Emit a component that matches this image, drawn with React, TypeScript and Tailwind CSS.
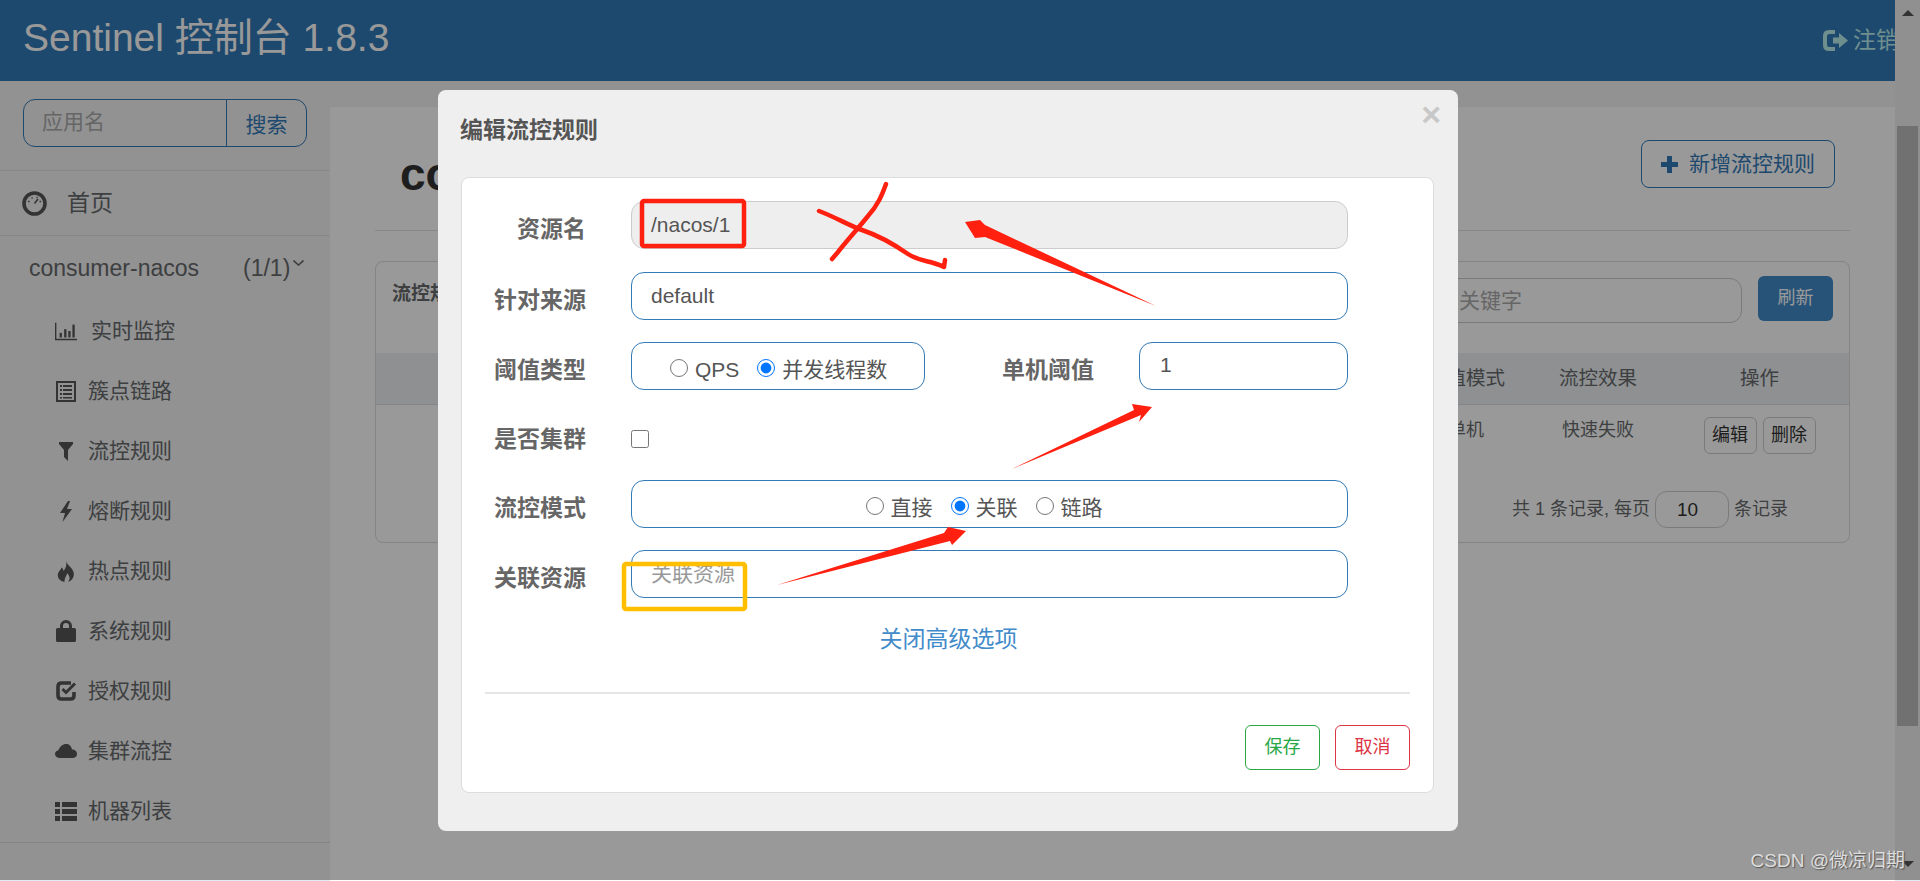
import React from "react";

const FONT = { fontFamily: '"Liberation Sans","Noto Sans CJK SC",sans-serif' };

const Fill = ({ w, h, d }: { w: number; h: number; d: string }) => (
  <svg width={w} height={h} viewBox={`0 0 ${w} ${h}`} fill="currentColor" fillRule="evenodd"><path d={d} /></svg>
);

const Dashboard = () => (
  <svg width="25" height="25" viewBox="0 0 25 25" fill="none" stroke="currentColor">
    <circle cx="12.5" cy="12.5" r="10.5" strokeWidth="3.6" />
    <path d="M12.5 12.5L16 8" strokeWidth="1.5" />
    <path d="M6 10.5h1.6M9.5 7h1.2M14.5 6.5h1.2M17.5 10.5h1.6" strokeWidth="1.6" />
  </svg>
);
const Stats = () => (
  <svg width="24" height="19" viewBox="0 0 24 19" fill="currentColor">
    <path d="M0 0h1.5v17.5H24V19H0z" />
    <rect x="5" y="11" width="2.5" height="5" /><rect x="10" y="7" width="2.5" height="9" />
    <rect x="14.5" y="9" width="2.5" height="7" /><rect x="19" y="2" width="2.5" height="14" />
  </svg>
);
const ListAlt = () => (
  <svg width="20" height="21" viewBox="0 0 20 21" fill="currentColor" fillRule="evenodd">
    <path d="M0 0h20v21H0zM2 2v17h16V2z" />
    <path d="M4 4h2v2H4zM7 4h9v2H7zM4 8h2v2H4zM7 8h9v2H7zM4 12h2v2H4zM7 12h9v2H7zM4 16h2v1.5H4zM7 16h9v1.5H7z" />
  </svg>
);
const Lock = () => (
  <svg width="20" height="22" viewBox="0 0 20 22" fill="currentColor" fillRule="evenodd">
    <path d="M4 8V6a6 6 0 0 1 12 0v2h2.5Q20 8 20 9.5V20.5Q20 22 18.5 22H1.5Q0 22 0 20.5V9.5Q0 8 1.5 8zM7 8h6V6a3 3 0 0 0-6 0z" />
  </svg>
);
const Check = () => (
  <svg width="21" height="20" viewBox="0 0 21 20" fill="none" stroke="currentColor">
    <path d="M15 2H5.5Q2 2 2 5.5V14.500Q2 18 5.500 18H14.500Q18 18 18 14.500V11" strokeWidth="3.600" />
    <path d="M6.500 8L10 11.500L19 2.500" strokeWidth="3" />
  </svg>
);
const Rows = () => (
  <svg width="22" height="19" viewBox="0 0 22 19" fill="currentColor">
    <path d="M0 0h5v5H0zM7 0h15v5H7zM0 7h5v5H0zM7 7h15v5H7zM0 14h5v5H0zM7 14h15v5H7z" />
  </svg>
);

const menu: { icon: React.ReactNode; text: string; cls?: string }[] = [
  { icon: <Stats />, text: "实时监控", cls: "pl-[3px]" },
  { icon: <ListAlt />, text: "簇点链路" },
  { icon: <Fill w={14} h={19} d="M0 0H14V2L9 8V19L5 15V8L0 2Z" />, text: "流控规则" },
  { icon: <Fill w={14} h={21} d="M9 0L1 12H6L3.5 21L13 8H8L11 0Z" />, text: "熔断规则" },
  { icon: <Fill w={18} h={21} d="M9 0C10 4 15 6 16.500 11C18 16 14.500 20 11 21C13.500 18 13 15 10 12C10 15 7.500 16 7.500 21C3 20 0 17 1 12.500C2 9.500 4 9 4.500 6.500C6 7.500 6.500 9 6.500 10C9 7 10 4 9 0Z" />, text: "热点规则" },
  { icon: <Lock />, text: "系统规则" },
  { icon: <Check />, text: "授权规则" },
  { icon: <Fill w={22} h={14} d="M5 14C2 14 0 12 0 10C0 8 1.500 6.500 3.500 6.300C4.500 2.500 8 0 11 0C14 0 16.500 2 17 5.500C20 5.500 22 7.500 22 10C22 12.500 20 14 17 14Z" />, text: "集群流控" },
  { icon: <Rows />, text: "机器列表" },
];

const Sidebar = () => (
  <aside className="w-[330px] shrink-0 bg-[#f3f3f4] text-[#676a6c]">
    <div className="h-[90px] pt-[18px] pl-[23px] border-b border-[#e2e2e4]">
      <div className="flex w-[284px] h-[48px] border border-[#337ab7] rounded-[12px] text-[21px] leading-[44px]">
        <div className="w-[203px] pl-[18px] text-[#aaaaaa] border-r border-[#337ab7]">应用名</div>
        <div className="flex-1 text-center text-[#337ab7] pt-[3px]">搜索</div>
      </div>
    </div>
    <div className="h-[65px] flex items-center pl-[22px] gap-[20px] border-b border-[#e2e2e4] text-[23px]">
      <span className="text-[#555]"><Dashboard /></span>
      <span>首页</span>
    </div>
    <div className="h-[65px] flex items-center pl-[29px] text-[23px]">
      <span className="w-[214px]">consumer-nacos</span>
      <span>(1/1)</span>
      <svg width="11" height="6" viewBox="0 0 11 6" fill="none" stroke="currentColor" strokeWidth="1.600" className="ml-[3px] mb-[12px]"><path d="M.5.5l5 4.500 5-4.500" /></svg>
    </div>
    <div className="border-b border-[#dcdcde] pb-[1px]">
      {menu.map((m) => (
        <div key={m.text} className="h-[60px] flex items-center pl-[55px] text-[21px]">
          <span className="w-[33px] flex justify-center pr-[11px] text-[#555]">{m.icon}</span>
          <span className={m.cls}>{m.text}</span>
        </div>
      ))}
    </div>
  </aside>
);

const Main = () => (
  <main className="flex-1 bg-[#f3f3f4] pt-[26px] text-[#676a6c] min-w-0">
    <div className="bg-white h-[774px] px-[45px]">
      <div className="h-[124px] flex items-center justify-between pr-[15px] border-b border-[#e0e0e0] pt-[12px]">
        <div className="text-[46px] font-bold text-[#333] pl-[25px]">consumer-nacos</div>
        <div className="w-[194px] h-[48px] border border-[#337ab7] rounded-[8px] flex items-center pl-[19px] gap-[11px] text-[21px] text-[#337ab7] -mt-[21px]">
          <svg width="17" height="17" viewBox="0 0 17 17" fill="currentColor"><path d="M6 0h5v6h6v5h-6v6H6v-6H0V6h6z" /></svg>
          <span>新增流控规则</span>
        </div>
      </div>
      <div className="mt-[30px] h-[282px] border border-[#dddddd] rounded-[8px] overflow-hidden">
        <div className="h-[91px] relative flex items-start pl-[16px] pr-[16px] pt-[14px]">
          <div className="font-bold text-[19px] pt-[4px]">流控规则</div>
          <div className="ml-auto h-[45px] w-[300px] mt-[2px] border border-[#cccccc] rounded-[12px] text-[21px] text-[#aaaaaa] leading-[43px] pl-[16px] mr-[16px]">关键字</div>
          <div className="w-[75px] h-[45px] bg-[#428bca] rounded-[6px] text-white text-[18px] flex items-center justify-center">刷新</div>
        </div>
        <div className="h-[52px] bg-[#edf0f4] border-b border-[#dddddd] flex items-center justify-end pr-[3px] text-[19.500px]">
          <div className="w-[114px] text-center">阈值模式</div>
          <div className="w-[150px] text-center">流控效果</div>
          <div className="w-[173px] text-center">操作</div>
        </div>
        <div className="h-[50px] flex items-start justify-end pr-[3px] text-[18px] pt-[12px]">
          <div className="w-[114px] text-center">单机</div>
          <div className="w-[150px] text-center">快速失败</div>
          <div className="w-[173px] flex justify-center gap-[6px] text-[#333]">
            <div className="w-[53px] h-[37px] border border-[#cccccc] rounded-[6px] flex items-center justify-center">编辑</div>
            <div className="w-[53px] h-[37px] border border-[#cccccc] rounded-[6px] flex items-center justify-center">删除</div>
          </div>
        </div>
        <div className="flex items-center justify-end pr-[61px] text-[18px] pt-[36px] gap-[5px]">
          <span>共 1 条记录, 每页</span>
          <div className="w-[74px] h-[37px] border border-[#cccccc] rounded-[12px] text-[19px] text-[#333] pl-[21px] leading-[35px]">10</div>
          <span>条记录</span>
        </div>
      </div>
    </div>
  </main>
);

const Scrollbar = () => (
  <div className="w-[25px] shrink-0 bg-[#f1f1f1] flex flex-col items-center relative">
    <svg width="12" height="6" viewBox="0 0 12 6" className="mt-[10px]" fill="#555"><path d="M6 0l6 6H0z" /></svg>
    <div className="w-[21px] h-[600px] bg-[#bdbdbd] mt-[110px]" />
    <svg width="12" height="6" viewBox="0 0 12 6" className="mt-[135px]" fill="#555"><path d="M0 0h12L6 6z" /></svg>
  </div>
);

const labelCls = "w-[124px] text-right font-bold text-[23px] text-[#666] shrink-0 mr-[45px] pt-[9px]";
const boxCls = "h-[48px] border border-[#337ab7] rounded-[13px] text-[21px] text-[#555]";

const Radio = ({ checked, children }: { checked?: boolean; children: React.ReactNode }) => (
  <label className="flex items-center">
    <input type="radio" readOnly checked={!!checked} className="ml-0 mr-0 mb-0 mt-[4px] w-[18px] h-[18px]" />
    <span className="ml-[7px] pt-[8px]">{children}</span>
  </label>
);

const Modal = () => (
  <div className="absolute left-[438px] top-[90px] w-[1020px] h-[741px] bg-[#efefef] rounded-[8px] pt-[87px] pl-[23px]">
    <div className="absolute left-[22px] top-[25px] text-[23px] font-bold text-[#555] leading-[30px]">编辑流控规则</div>
    <div className="absolute right-[17px] top-[2px] text-[34px] font-bold text-[#c8c8c8] leading-[36px] pt-[4px]">×</div>
    <div className="w-[973px] h-[616px] bg-white border border-[#dddddd] rounded-[8px] pt-[23px]">
      <div className="flex items-center h-[48px] mb-[23px]">
        <div className={labelCls}>资源名</div>
        <div className="flex-1 mr-[85px] h-[48px] bg-[#eeeeee] border border-[#cccccc] rounded-[13px] text-[21px] text-[#555] flex items-center pl-[19px]">/nacos/1</div>
      </div>
      <div className="flex items-center h-[48px] mb-[22px]">
        <div className={labelCls}>针对来源</div>
        <div className={`${boxCls} flex-1 mr-[85px] flex items-center pl-[19px]`}>default</div>
      </div>
      <div className="flex items-center h-[48px] mb-[23px]">
        <div className={labelCls}>阈值类型</div>
        <div className={`${boxCls} w-[294px] flex items-center pl-[38px] gap-[18px]`}>
          <Radio>QPS</Radio>
          <Radio checked>并发线程数</Radio>
        </div>
        <div className="font-bold text-[23px] text-[#666] ml-[77px] pt-[9px]">单机阈值</div>
        <div className={`${boxCls} w-[209px] ml-[45px] flex items-center pl-[20px]`}><span className="-mt-[2px]">1</span></div>
      </div>
      <div className="flex items-center h-[44px] mb-[23px]">
        <div className={labelCls}>是否集群</div>
        <input type="checkbox" readOnly className="ml-0 mr-0 mb-0 mt-[8px] w-[18px] h-[18px]" />
      </div>
      <div className="flex items-center h-[48px] mb-[22px]">
        <div className={labelCls}>流控模式</div>
        <div className={`${boxCls} flex-1 mr-[85px] flex items-center justify-center gap-[18px] pr-[11px]`}>
          <Radio>直接</Radio>
          <Radio checked>关联</Radio>
          <Radio>链路</Radio>
        </div>
      </div>
      <div className="flex items-center h-[48px]">
        <div className={labelCls}>关联资源</div>
        <div className={`${boxCls} flex-1 mr-[85px] flex items-center pl-[19px] text-[#999999]`}>关联资源</div>
      </div>
      <div className="text-center text-[23px] text-[#428bca] mt-[24px] mr-[-2px] leading-[34px]">关闭高级选项</div>
      <div className="h-[2px] bg-[#e5e5e5] mx-[23px] mt-[36px]" />
      <div className="flex justify-end gap-[15px] mt-[31px] mr-[23px] text-[18px]">
        <div className="w-[75px] h-[45px] border border-[#28a745] text-[#28a745] rounded-[6px] flex items-center justify-center">保存</div>
        <div className="w-[75px] h-[45px] border border-[#dc3545] text-[#dc3545] rounded-[6px] flex items-center justify-center">取消</div>
      </div>
    </div>
  </div>
);

const Marks = () => (
  <svg className="absolute inset-0 pointer-events-none" width="1920" height="881" viewBox="0 0 1920 881" fill="none">
    <rect x="642" y="201" width="102" height="45" rx="2" stroke="#ff2010" strokeWidth="4.500" />
    <rect x="624" y="564" width="121" height="45" rx="2" stroke="#ffbf00" strokeWidth="4.500" />
    <g stroke="#ff2010" strokeWidth="4.500" strokeLinecap="round" strokeLinejoin="round">
      <path d="M886 184C882 195 878 205 868 216C855 232 845 243 838 252L832 259" />
      <path d="M819 211C835 217 850 226 862 230C880 236 895 245 908 254C920 262 930 260 944 267L945 260" />
    </g>
    <g fill="#ff2010">
      <path d="M965 222L980 220L985 225L1156 306L985 237L975 238Z" />
      <path d="M1012 469L1134 410L1132 404L1152 407L1139 422L1141 415Z" />
      <path d="M777 585L944 533L948 527L966 531L952 545L950 541Z" />
    </g>
  </svg>
);

export default function App() {
  return (
    <div className="relative w-[1920px] h-[881px] overflow-hidden bg-[#dfeaf2]" style={FONT}>
      <div className="flex h-[880px]">
        <div className="flex-1 min-w-0 flex flex-col">
          <header className="h-[81px] shrink-0 bg-[#337ab7] flex items-center justify-between pl-[23px] overflow-hidden">
            <div className="text-[39px] text-white -mt-[5px]">Sentinel 控制台 1.8.3</div>
            <div className="flex items-center gap-[5px] text-[23px] text-[#b9eeed] w-[72px] shrink-0 whitespace-nowrap">
              <svg width="25" height="21" viewBox="0 0 25 21" className="shrink-0" fill="currentColor" fillRule="evenodd">
                <path d="M6 0h6v4H6.500Q4 4 4 6.500v8Q4 17 6.500 17H12v4H6Q0 21 0 15V6Q0 0 6 0z" />
                <path d="M10 7.500h6V3l9 7.500-9 7.500v-4.500h-6z" />
              </svg>
              <span className="shrink-0">注销</span>
            </div>
          </header>
          <div className="flex flex-1 min-h-0">
            <Sidebar />
            <Main />
          </div>
        </div>
        <Scrollbar />
      </div>
      <div className="absolute inset-x-0 top-0 h-[880px] bg-black/40" />
      <Modal />
      <Marks />
      <div className="absolute right-[15px] top-[847px] text-[19px] leading-[28px] text-[#dddddd] [text-shadow:1px_1px_1px_#555]">CSDN @微凉归期</div>
    </div>
  );
}
